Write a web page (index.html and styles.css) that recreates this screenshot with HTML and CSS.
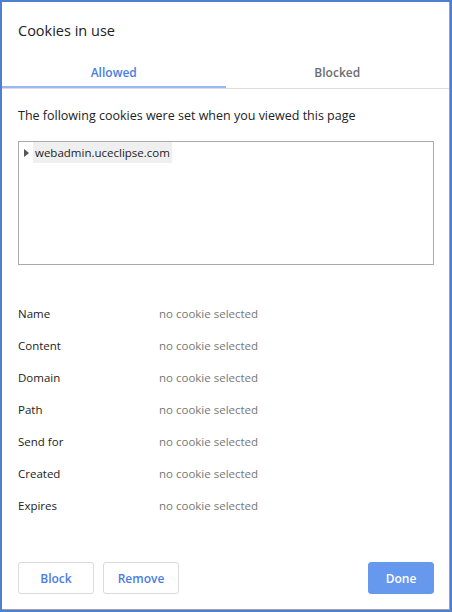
FILE: index.html
```html
<!DOCTYPE html>
<html>
<head>
<meta charset="utf-8">
<link rel="stylesheet" href="styles.css">
</head>
<body>
<div class="dialog">
  <h1 class="title">Cookies in use</h1>
  <div class="tabs">
    <div class="tab active">Allowed</div>
    <div class="tab">Blocked</div>
  </div>
  <div class="content">
    <p class="intro">The following cookies were set when you viewed this page</p>
    <div class="tree">
      <div class="node">
        <svg class="arrow" width="5" height="8" viewBox="0 0 5 8"><path d="M0 0 L5 4 L0 8 Z" fill="#555"/></svg>
        <span class="node-label">webadmin.uceclipse.com</span>
      </div>
    </div>
    <div class="details">
      <div class="row"><span class="label">Name</span><span class="value">no cookie selected</span></div>
      <div class="row"><span class="label">Content</span><span class="value">no cookie selected</span></div>
      <div class="row"><span class="label">Domain</span><span class="value">no cookie selected</span></div>
      <div class="row"><span class="label">Path</span><span class="value">no cookie selected</span></div>
      <div class="row"><span class="label">Send for</span><span class="value">no cookie selected</span></div>
      <div class="row"><span class="label">Created</span><span class="value">no cookie selected</span></div>
      <div class="row"><span class="label">Expires</span><span class="value">no cookie selected</span></div>
    </div>
  </div>
  <div class="buttons">
    <button class="btn">Block</button>
    <button class="btn">Remove</button>
    <span class="spacer"></span>
    <button class="btn primary">Done</button>
  </div>
</div>
</body>
</html>
```
FILE: styles.css
```css
html, body {
  margin: 0;
  padding: 0;
  height: 100%;
}
body {
  background: #4f7fcf;
  font-family: "Open Sans", "Noto Sans", sans-serif;
  color: #222;
  padding: 2px 2px 2px 2px;
  box-sizing: border-box;
}
.dialog {
  background: #fff;
  height: 608px;
  border-right: 1px solid #a0a0a0;
  border-bottom: 1px solid #a0a0a0;
  box-sizing: border-box;
  display: flex;
  flex-direction: column;
}
.title {
  margin: 0;
  font-weight: normal;
  font-size: 14.5px;
  line-height: 20px;
  padding: 19px 0 0 16px;
  color: #222;
}
.tabs {
  display: flex;
  margin-top: 24px;
  border-bottom: 1px solid #dcdcdc;
}
.tab {
  flex: 1;
  text-align: center;
  font-size: 12px;
  font-weight: 600;
  color: #6d6d6d;
  line-height: 16px;
  padding-bottom: 7px;
}
.tab.active {
  color: #4a7ddf;
  box-shadow: inset 0 -2px 0 #97b8f5;
}
.content {
  padding: 0 15px 0 16px;
  flex: 1;
}
.intro {
  margin: 18px 0 0;
  font-size: 12.5px;
  line-height: 18px;
}
.tree {
  margin-top: 16px;
  height: 124px;
  border: 1px solid #a9a9a9;
  box-sizing: border-box;
  padding: 0 0 0 5px;
}
.node {
  display: flex;
  align-items: center;
  height: 21px;
}
.arrow {
  margin-right: 4px;
}
.node-label {
  background: #efefef;
  font-size: 11.5px;
  line-height: 21px;
  padding: 0 2px;
}
.details {
  margin-top: 41px;
}
.row {
  display: flex;
  height: 32px;
  align-items: flex-start;
  font-size: 11.5px;
  line-height: 16px;
}
.label {
  width: 141px;
  color: #222;
}
.value {
  color: #777;
}
.buttons {
  display: flex;
  padding: 0 15px 15px 16px;
  gap: 9px;
}
.spacer {
  flex: 1;
}
.btn {
  font-family: inherit;
  font-size: 12px;
  font-weight: 600;
  color: #4a7ddf;
  background: #fff;
  border: 1px solid #dadada;
  border-radius: 3px;
  height: 32px;
  width: 76px;
  padding: 0;
}
.btn.primary {
  background: #6699ee;
  border-color: #6699ee;
  color: #fff;
  width: 66px;
}
```
